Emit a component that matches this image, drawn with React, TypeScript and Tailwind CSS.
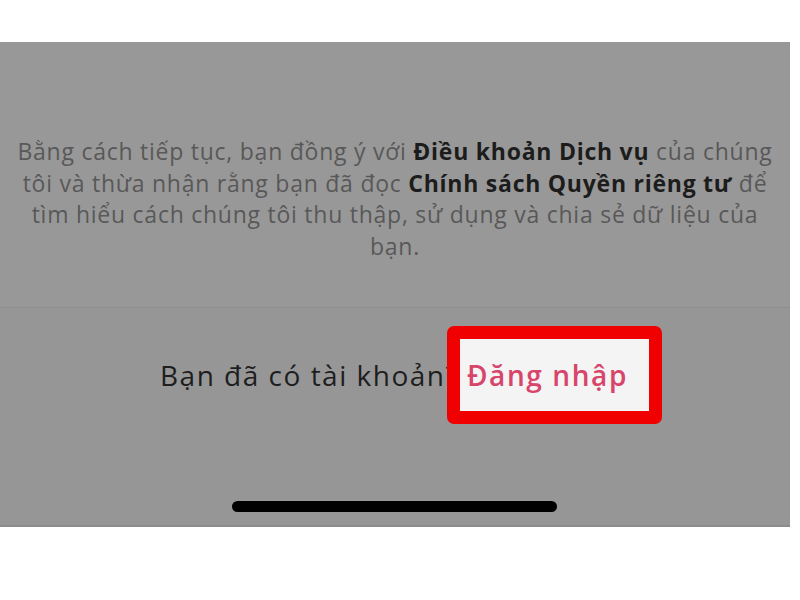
export default function App() {
  return (
    <div className="w-[800px] h-[600px] bg-white pt-[42px]" style={{ fontFamily: '"Open Sans", "Noto Sans", sans-serif' }}>
      <div className="w-[790px] h-[485px] bg-[#989898] flex flex-col">
        <div className="h-[266px] flex flex-col justify-end pb-[45px] border-b border-[#8e8e8e]">
          <p className="text-center text-[23px] tracking-[0.75px] leading-[31.5px] text-[#585858]">
            Bằng cách tiếp tục, bạn đồng ý với <b className="font-bold text-[#1c1c1c]">Điều khoản Dịch vụ</b> của chúng
            <br />
            tôi và thừa nhận rằng bạn đã đọc <b className="font-bold text-[#1c1c1c]">Chính sách Quyền riêng tư</b> để
            <br />
            tìm hiểu cách chúng tôi thu thập, sử dụng và chia sẻ dữ liệu của
            <br />
            bạn.
          </p>
        </div>
        <div className="flex-1 bg-[#969696] flex flex-col border-b-2 border-[#8c8c8c]">
          <div className="mt-[18px] flex items-center pl-[160px]">
            <span className="w-[287px] whitespace-nowrap text-[28px] tracking-[1.5px] text-[#1e1e1e]">Bạn đã có tài khoản?</span>
            <span className="w-[215px] h-[98px] rounded-[7px] bg-[#f4f4f4] border-[13px] border-[#f00000] flex items-center pl-[7px] text-[28px] tracking-[1.6px] text-[#d8456a] font-semibold">
              Đăng nhập
            </span>
          </div>
          <div className="mt-auto mb-[13px] ml-[232px] w-[325px] h-[11px] rounded-full bg-black" />
        </div>
      </div>
    </div>
  );
}
